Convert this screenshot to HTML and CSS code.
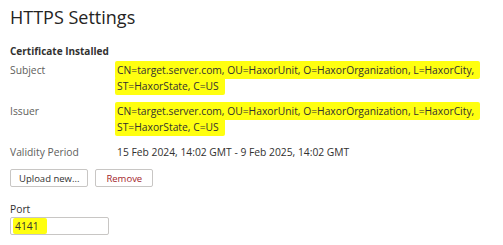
FILE: index.html
```html
<!DOCTYPE html>
<html>
<head>
    <link rel="stylesheet" href="styles.css">
</head>
<body>
    <div class="page">
        <h1 class="title">HTTPS Settings</h1>
        <h2 class="section">Certificate Installed</h2>
        <div class="details">
            <div class="label">Subject</div>
            <div class="value"><span class="mark">CN=target.server.com, OU=HaxorUnit, O=HaxorOrganization, L=HaxorCity,</span><br><span class="mark">ST=HaxorState, C=US</span></div>
            <div class="label">Issuer</div>
            <div class="value"><span class="mark">CN=target.server.com, OU=HaxorUnit, O=HaxorOrganization, L=HaxorCity,</span><br><span class="mark">ST=HaxorState, C=US</span></div>
            <div class="label">Validity Period</div>
            <div class="value">15 Feb 2024, 14:02 GMT - 9 Feb 2025, 14:02 GMT</div>
        </div>
        <div class="actions">
            <button class="btn">Upload new...</button>
            <button class="btn danger">Remove</button>
        </div>
        <div class="field">
            <label class="field-label">Port</label>
            <div class="input"><span class="mark small">4141</span></div>
        </div>
    </div>
</body>
</html>
```

FILE: styles.css
```css
body {
    margin: 0;
    background: #fff;
    font-family: "Open Sans", Arial, sans-serif;
    color: #323130;
}

.page {
    padding: 5px 10px;
}

.title {
    margin: 0;
    font-size: 18px;
    font-weight: 400;
    line-height: 24px;
    color: #252423;
}

.section {
    margin: 15px 0 4px;
    font-size: 10px;
    font-weight: 700;
    line-height: 14px;
}

.details {
    display: grid;
    grid-template-columns: 107px 1fr;
    row-gap: 9px;
    font-size: 10.3px;
    line-height: 16px;
}

.label {
    color: #605e5c;
}

.value {
    color: #323130;
}

.mark {
    background: #ffff10;
    padding: 2px 6px 2px 2px;
    margin-left: -2px;
    border-radius: 2px;
}

.actions {
    display: flex;
    gap: 7px;
    margin-top: 9px;
}

.btn {
    font-family: inherit;
    font-size: 9.5px;
    height: 18px;
    padding: 0 8px;
    background: #fff;
    border: 1px solid #c8c6c4;
    border-radius: 2px;
    color: #323130;
}

.btn.danger {
    color: #a4262c;
    padding: 0 10px;
}

.field {
    margin-top: 14px;
}

.field-label {
    display: block;
    font-size: 10.3px;
    line-height: 16px;
    color: #323130;
}

.input {
    width: 95px;
    height: 16px;
    border: 1px solid #c8c6c4;
    border-radius: 2px;
    font-size: 10.3px;
    line-height: 16px;
    padding-left: 2px;
}

.mark.small {
    padding: 1px 8px 1px 2px;
    margin-left: 0;
}
```
